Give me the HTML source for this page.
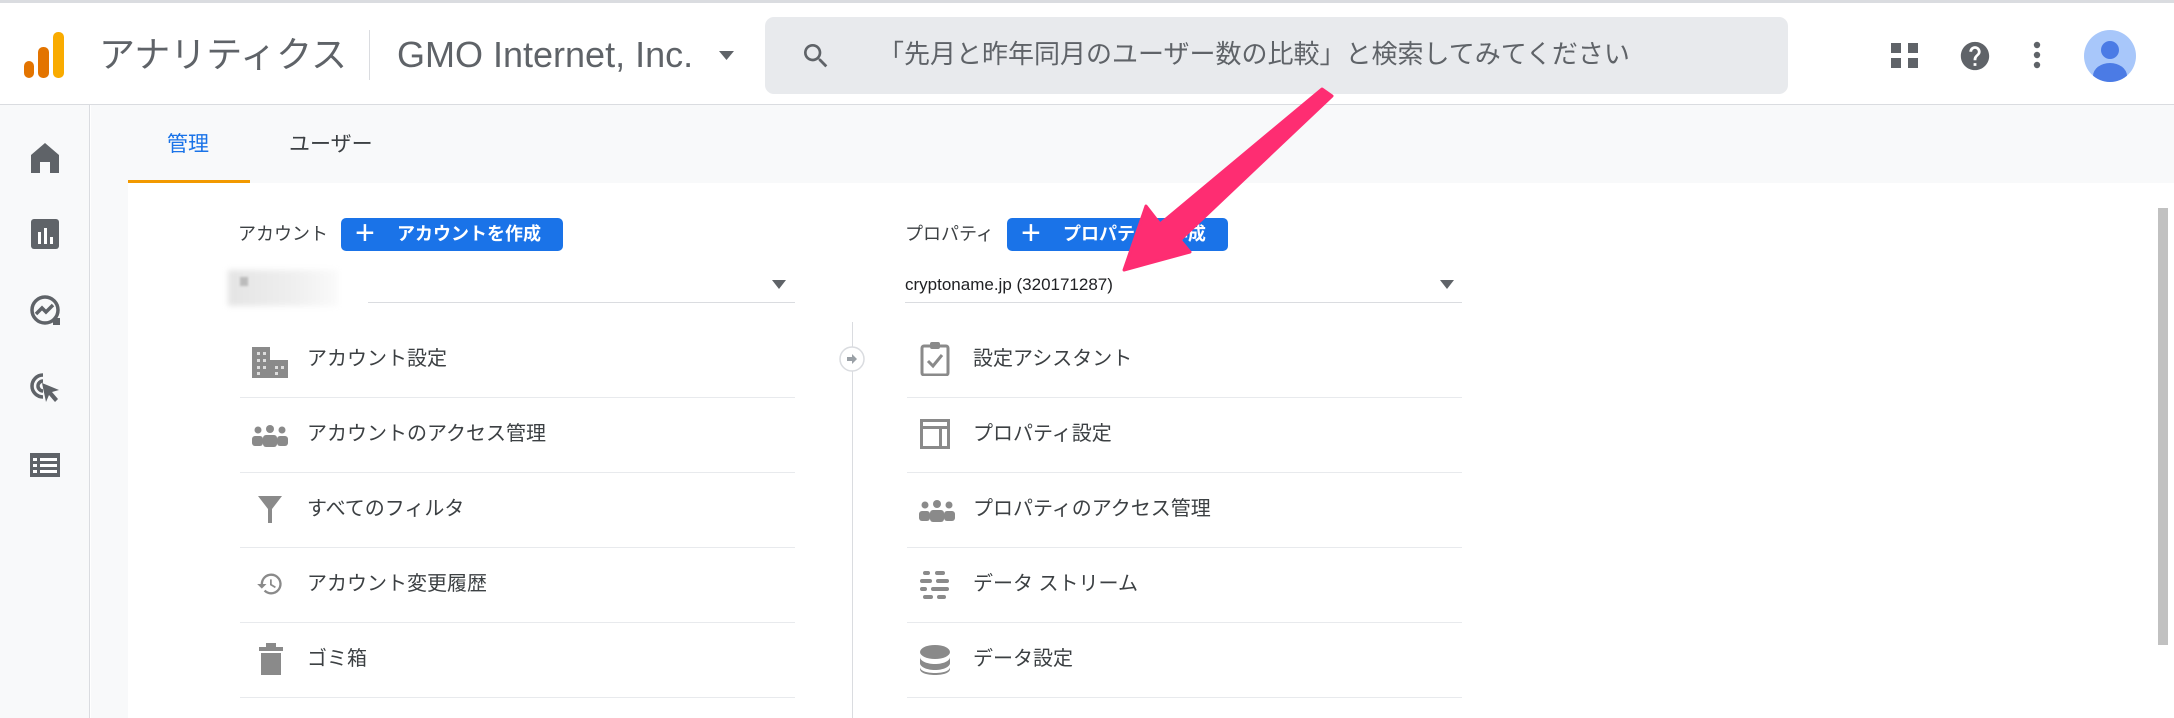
<!DOCTYPE html>
<html><head><meta charset="utf-8"><style>
*{margin:0;padding:0;box-sizing:border-box}
body{width:2174px;height:718px;overflow:hidden;background:#fff;font-family:"Liberation Sans","Noto Sans CJK JP",sans-serif;position:relative;color:#202124}
.a{position:absolute}
.t{position:absolute;white-space:nowrap;line-height:1}
.sep{position:absolute;height:1px;background:#e8eaed}
.btn{position:absolute;background:#1a73e8;border-radius:5px;color:#fff;font-weight:bold;font-size:18px;height:33px;line-height:33px;white-space:nowrap}
.row{position:absolute;font-size:20px;color:#3c4043;line-height:1;white-space:nowrap}
</style></head><body>
<div class="a" style="left:0;top:0;width:2174px;height:3px;background:#dadce0"></div>
<div class="a" style="left:0;top:104px;width:2174px;height:1px;background:#dadce0"></div>
<svg class="a" style="left:24px;top:31px" width="42" height="48"><rect x="0" y="30" width="10" height="17" rx="5" fill="#e37400"/><rect x="14" y="16" width="11" height="31" rx="5" fill="#e37400"/><rect x="29" y="1" width="11" height="46" rx="5" fill="#f9ab00"/></svg>
<div class="t" style="left:99px;top:37px;font-size:36px;color:#5f6368">アナリティクス</div>
<div class="a" style="left:369px;top:30px;width:1px;height:50px;background:#dadce0"></div>
<div class="t" style="left:397px;top:37px;font-size:36px;color:#5f6368">GMO Internet, Inc.</div>
<svg class="a" style="left:719px;top:51px" width="15" height="9"><path d="M0 0h15L7.5 9z" fill="#5f6368"/></svg>
<div class="a" style="left:765px;top:17px;width:1023px;height:77px;background:#e8eaed;border-radius:9px"></div>
<svg class="a" style="left:800px;top:40px" width="32" height="32" viewBox="0 0 24 24"><path d="M15.5 14h-.79l-.28-.27A6.470 6.470 0 0016 9.5 6.5 6.5 0 109.5 16c1.61 0 3.090-.59 4.23-1.57l.27.28v.79l5 4.99L20.49 19l-4.99-5zm-6 0C7.01 14 5 11.99 5 9.5S7.01 5 9.5 5 14 7.01 14 9.5 11.99 14 9.5 14z" fill="#5f6368"/></svg>
<div class="t" style="left:878px;top:41px;font-size:26px;color:#5f6368">「先月と昨年同月のユーザー数の比較」と検索してみてください</div>
<svg class="a" style="left:1891px;top:43px" width="28" height="26"><rect x="0" y="0" width="10" height="10" fill="#5f6368"/><rect x="17" y="0" width="10" height="10" fill="#5f6368"/><rect x="0" y="15" width="10" height="10" fill="#5f6368"/><rect x="17" y="15" width="10" height="10" fill="#5f6368"/></svg>
<svg class="a" style="left:1958px;top:39px" width="34" height="34" viewBox="0 0 24 24"><path d="M12 2C6.48 2 2 6.48 2 12s4.48 10 10 10 10-4.48 10-10S17.52 2 12 2zm1 17h-2v-2h2v2zm2.070-7.75l-.9.92C13.45 12.9 13 13.5 13 15h-2v-.5c0-1.1.45-2.1 1.17-2.83l1.24-1.26c.37-.36.59-.86.59-1.41 0-1.1-.9-2-2-2s-2 .9-2 2H8c0-2.21 1.79-4 4-4s4 1.79 4 4c0 .88-.36 1.68-.93 2.25z" fill="#5f6368"/></svg>
<svg class="a" style="left:2033px;top:41px" width="8" height="28"><circle cx="4" cy="4" r="3.2" fill="#5f6368"/><circle cx="4" cy="14" r="3.2" fill="#5f6368"/><circle cx="4" cy="24" r="3.2" fill="#5f6368"/></svg>
<svg class="a" style="left:2084px;top:30px" width="52" height="52"><defs><clipPath id="c"><circle cx="26" cy="26" r="26"/></clipPath></defs><circle cx="26" cy="26" r="26" fill="#a8c7fa"/><g clip-path="url(#c)" fill="#4b7be5"><circle cx="26" cy="20" r="9"/><ellipse cx="26" cy="46" rx="17" ry="13"/></g></svg>
<div class="a" style="left:0;top:105px;width:90px;height:613px;background:#f8f9fa;border-right:1px solid #dadce0"></div>
<svg class="a" style="left:31px;top:143px" width="28" height="30" viewBox="0 0 28 30"><path d="M14 0L28 12v18h-9V19h-10v11H0V12z" fill="#5f6368"/></svg>
<svg class="a" style="left:31px;top:219px" width="28" height="30"><rect width="28" height="30" rx="3" fill="#5f6368"/><rect x="7" y="13" width="3" height="12" fill="#fff"/><rect x="13" y="9" width="3" height="16" fill="#fff"/><rect x="19" y="18" width="3" height="7" fill="#fff"/></svg>
<svg class="a" style="left:29px;top:294px" width="32" height="32" viewBox="0 0 32 32"><circle cx="16" cy="16" r="13" fill="none" stroke="#5f6368" stroke-width="3.5"/><path d="M7 20l6-6 4 4 7-7" fill="none" stroke="#5f6368" stroke-width="3.5"/><rect x="24" y="24" width="7" height="7" fill="#5f6368"/></svg>
<svg class="a" style="left:29px;top:371px" width="32" height="34" viewBox="0 0 32 34"><path d="M14 4a11 11 0 1 0 0 22" fill="none" stroke="#5f6368" stroke-width="3.5"/><path d="M14 10a5 5 0 1 0 0 10" fill="none" stroke="#5f6368" stroke-width="3.5"/><path d="M13 12l17 7-7 2 6 7-3 3-6-7-3 7z" fill="#5f6368"/></svg>
<svg class="a" style="left:30px;top:453px" width="30" height="24"><rect width="30" height="24" fill="#5f6368"/><g fill="#fff"><rect x="3" y="5" width="4" height="3"/><rect x="10" y="5" width="17" height="3"/><rect x="3" y="11" width="4" height="3"/><rect x="10" y="11" width="17" height="3"/><rect x="3" y="17" width="4" height="3"/><rect x="10" y="17" width="17" height="3"/></g></svg>
<div class="a" style="left:91px;top:105px;width:2083px;height:78px;background:#f8f9fa"></div>
<div class="a" style="left:91px;top:183px;width:37px;height:535px;background:#f8f9fa"></div>
<div class="t" style="left:167px;top:134px;font-size:21px;color:#1a73e8">管理</div>
<div class="t" style="left:289px;top:134px;font-size:21px;color:#3c4043">ユーザー</div>
<div class="a" style="left:128px;top:180px;width:122px;height:3px;background:#f29900"></div>
<div class="a" style="left:2158px;top:208px;width:10px;height:437px;background:#c1c1c1"></div>
<div class="t" style="left:238px;top:225px;font-size:18px;color:#3c4043">アカウント</div>
<div class="btn" style="left:341px;top:218px;width:222px"><span style="font-weight:normal;font-size:34px;position:absolute;left:14px;top:0px;line-height:31px">+</span><span style="position:absolute;left:56px">アカウントを作成</span></div>
<div class="a" style="left:228px;top:270px;width:110px;height:36px;background:linear-gradient(90deg,#e4e4e4,#efefef 60%,#fafafa);filter:blur(3px)"></div>
<div class="a" style="left:240px;top:277px;width:8px;height:9px;background:#bbb;filter:blur(1px)"></div>
<div class="a" style="left:368px;top:302px;width:427px;height:1px;background:#dadce0"></div>
<svg class="a" style="left:772px;top:280px" width="14" height="9"><path d="M0 0h14L7 9z" fill="#5f6368"/></svg>
<div class="t" style="left:905px;top:225px;font-size:18px;color:#3c4043">プロパティ</div>
<div class="btn" style="left:1007px;top:218px;width:221px"><span style="font-weight:normal;font-size:34px;position:absolute;left:14px;top:0px;line-height:31px">+</span><span style="position:absolute;left:56px">プロパティを作成</span></div>
<div class="t" style="left:905px;top:276px;font-size:17px;color:#202124">cryptoname.jp (320171287)</div>
<div class="a" style="left:905px;top:302px;width:557px;height:1px;background:#dadce0"></div>
<svg class="a" style="left:1440px;top:280px" width="14" height="9"><path d="M0 0h14L7 9z" fill="#5f6368"/></svg>
<div class="a" style="left:852px;top:322px;width:1px;height:396px;background:#dadce0"></div>
<svg class="a" style="left:839px;top:346px" width="26" height="26"><circle cx="13" cy="13" r="12" fill="#fff" stroke="#dadce0" stroke-width="1.5"/><path d="M8 11h5V8l5 5-5 5v-3H8z" fill="#9aa0a6"/></svg>
<div class="sep" style="left:240px;top:397px;width:555px"></div>
<div class="sep" style="left:240px;top:472px;width:555px"></div>
<div class="sep" style="left:240px;top:547px;width:555px"></div>
<div class="sep" style="left:240px;top:622px;width:555px"></div>
<div class="sep" style="left:240px;top:697px;width:555px"></div>
<div class="sep" style="left:907px;top:397px;width:555px"></div>
<div class="sep" style="left:907px;top:472px;width:555px"></div>
<div class="sep" style="left:907px;top:547px;width:555px"></div>
<div class="sep" style="left:907px;top:622px;width:555px"></div>
<div class="sep" style="left:907px;top:697px;width:555px"></div>
<svg class="a" style="left:252px;top:347px" width="36" height="31"><rect x="0" y="0" width="18" height="31" fill="#8a8a8a"/><rect x="18" y="13" width="18" height="18" fill="#8a8a8a"/><g fill="#ddd"><rect x="5" y="5" width="3" height="3"/><rect x="11" y="5" width="3" height="3"/><rect x="5" y="12" width="3" height="3"/><rect x="11" y="12" width="3" height="3"/><rect x="5" y="19" width="3" height="3"/><rect x="11" y="19" width="3" height="3"/><rect x="23" y="19" width="3" height="3"/><rect x="29" y="19" width="3" height="3"/><rect x="5" y="25" width="3" height="3"/><rect x="23" y="25" width="3" height="3"/></g></svg>
<div class="row" style="left:307px;top:349px">アカウント設定</div>
<svg class="a" style="left:252px;top:425px" width="36" height="22"><g fill="#8a8a8a"><circle cx="6" cy="5" r="3.5"/><circle cx="18" cy="4" r="4"/><circle cx="30" cy="5" r="3.5"/><rect x="0" y="11" width="11" height="10" rx="3"/><rect x="11" y="10" width="14" height="12" rx="3"/><rect x="25" y="11" width="11" height="10" rx="3"/></g></svg>
<div class="row" style="left:307px;top:424px">アカウントのアクセス管理</div>
<svg class="a" style="left:258px;top:496px" width="24" height="27"><path d="M0 0h24L14 13v14h-4V13z" fill="#8a8a8a"/></svg>
<div class="row" style="left:307px;top:499px">すべてのフィルタ</div>
<svg class="a" style="left:256px;top:570px" width="28" height="28" viewBox="0 0 24 24"><path d="M13 3a9 9 0 0 0-9 9H1l4 4 4-4H6a7 7 0 1 1 2.050 4.950l-1.420 1.420A9 9 0 1 0 13 3zm-1 5v5l4.250 2.520.770-1.280-3.520-2.090V8z" fill="#8a8a8a"/></svg>
<div class="row" style="left:307px;top:574px">アカウント変更履歴</div>
<svg class="a" style="left:259px;top:643px" width="24" height="32"><rect x="7" y="0" width="10" height="4" fill="#8a8a8a"/><rect x="0" y="4" width="24" height="4" fill="#8a8a8a"/><rect x="2" y="10" width="20" height="22" fill="#8a8a8a"/></svg>
<div class="row" style="left:307px;top:649px">ゴミ箱</div>
<svg class="a" style="left:920px;top:342px" width="30" height="34"><rect x="2" y="4" width="26" height="29" rx="2" fill="none" stroke="#8a8a8a" stroke-width="3"/><rect x="10" y="0" width="10" height="7" rx="2" fill="#8a8a8a"/><path d="M8 19l5 5 9-11" fill="none" stroke="#8a8a8a" stroke-width="3"/></svg>
<div class="row" style="left:973px;top:349px">設定アシスタント</div>
<svg class="a" style="left:920px;top:419px" width="30" height="30"><rect x="1.5" y="1.5" width="27" height="27" fill="none" stroke="#8a8a8a" stroke-width="3"/><rect x="1.5" y="7" width="27" height="3" fill="#8a8a8a"/><rect x="19" y="8" width="3" height="20" fill="#8a8a8a"/></svg>
<div class="row" style="left:973px;top:424px">プロパティ設定</div>
<svg class="a" style="left:919px;top:500px" width="36" height="22"><g fill="#8a8a8a"><circle cx="6" cy="5" r="3.5"/><circle cx="18" cy="4" r="4"/><circle cx="30" cy="5" r="3.5"/><rect x="0" y="11" width="11" height="10" rx="3"/><rect x="11" y="10" width="14" height="12" rx="3"/><rect x="25" y="11" width="11" height="10" rx="3"/></g></svg>
<div class="row" style="left:973px;top:499px">プロパティのアクセス管理</div>
<svg class="a" style="left:920px;top:571px" width="30" height="28"><g fill="#8a8a8a"><rect x="3" y="0" width="7" height="4" rx="2"/><rect x="15" y="0" width="10" height="4" rx="2"/><rect x="0" y="8" width="12" height="4" rx="2"/><rect x="16" y="8" width="13" height="4" rx="2"/><rect x="0" y="16" width="7" height="4" rx="2"/><rect x="11" y="16" width="18" height="4" rx="2"/><rect x="3" y="24" width="10" height="4" rx="2"/><rect x="17" y="24" width="9" height="4" rx="2"/></g></svg>
<div class="row" style="left:973px;top:574px">データ ストリーム</div>
<svg class="a" style="left:920px;top:645px" width="30" height="30"><g fill="#8a8a8a"><ellipse cx="15" cy="7" rx="15" ry="7"/><path d="M0 12c0 4 7 7 15 7s15-3 15-7v6c0 4-7 7-15 7S0 22 0 18z"/><path d="M0 22c0 4 7 6 15 6s15-2 15-6v2c0 4-7 6-15 6S0 28 0 24z"/></g></svg>
<div class="row" style="left:973px;top:649px">データ設定</div>
<svg class="a" style="left:0;top:0" width="2174" height="718"><path d="M1322 89 L1332 96 L1180 240 L1190 252 L1124 270 L1146 206 L1160 224 Z" fill="#fe2d72" stroke="#fe2d72" stroke-width="3" stroke-linejoin="round"/></svg>
</body></html>
